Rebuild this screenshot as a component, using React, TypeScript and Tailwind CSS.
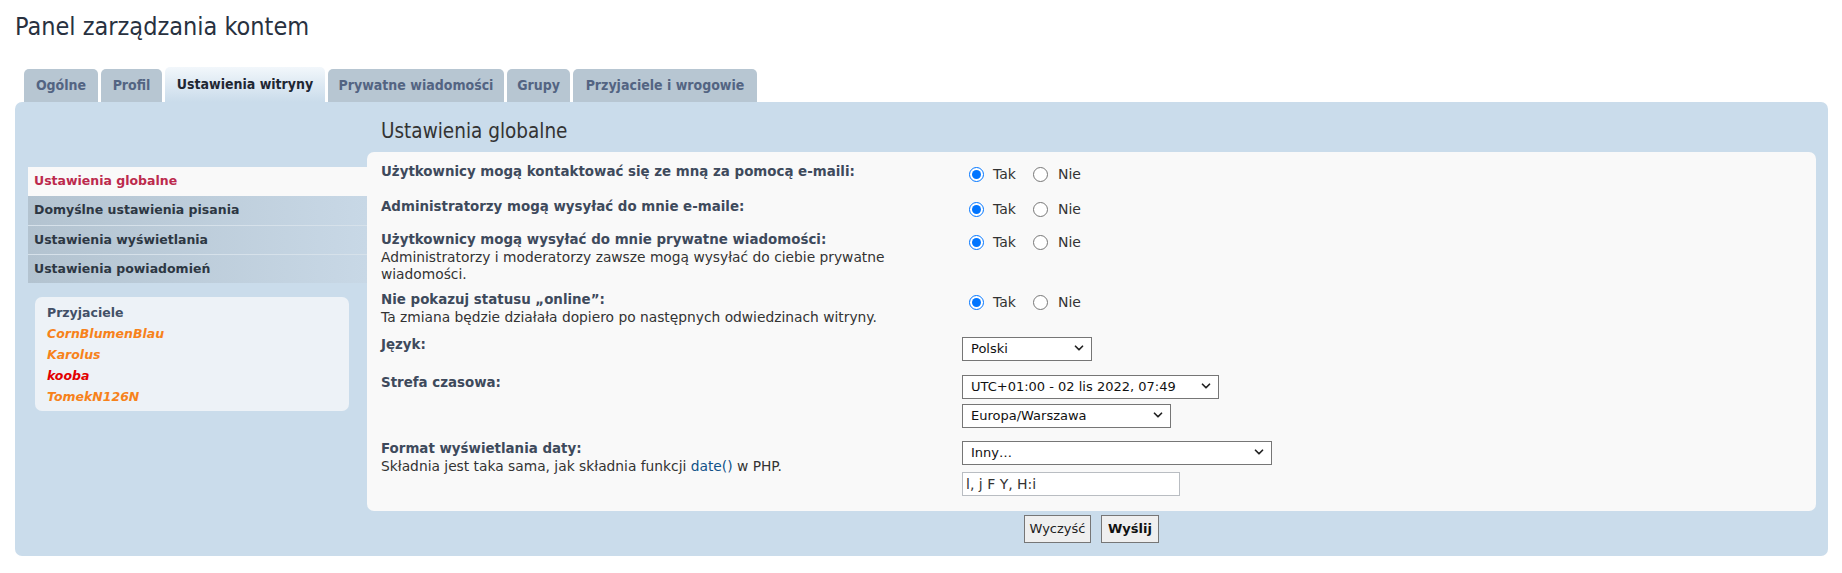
import React from 'react';
import { ChevronDown } from 'lucide-react';

const tabs = [
  { label: 'Ogólne', w: 'w-[74px]' },
  { label: 'Profil', w: 'w-[61px]' },
  { label: 'Ustawienia witryny', w: 'w-[160px]', active: true },
  { label: 'Prywatne wiadomości', w: 'w-[176px]' },
  { label: 'Grupy', w: 'w-[63px]' },
  { label: 'Przyjaciele i wrogowie', w: 'w-[184px]' },
];

const navItems = [
  { label: 'Ustawienia globalne', active: true },
  { label: 'Domyślne ustawienia pisania' },
  { label: 'Ustawienia wyświetlania' },
  { label: 'Ustawienia powiadomień' },
];

const friends = [
  { name: 'CornBlumenBlau', color: 'text-[#f7821b]' },
  { name: 'Karolus', color: 'text-[#f7821b]' },
  { name: 'kooba', color: 'text-[#e30000]' },
  { name: 'TomekN126N', color: 'text-[#f7821b]' },
];

function YesNo({ name }: { name: string }) {
  return (
    <div className="flex items-center pt-[4px] text-[14px] text-[#333]">
      <label className="flex items-center">
        <input type="radio" name={name} defaultChecked className="ml-[7px] h-[15px] w-[15px]" />
        <span className="ml-[9px] leading-[15px]">Tak</span>
      </label>
      <label className="ml-[17px] flex items-center">
        <input type="radio" name={name} className="h-[15px] w-[15px]" />
        <span className="ml-[10px] leading-[15px]">Nie</span>
      </label>
    </div>
  );
}

function Select({ value, w }: { value: string; w: string }) {
  return (
    <div className={`relative h-[24px] ${w}`}>
      <select
        defaultValue={value}
        className="h-full w-full appearance-none border border-[#767676] bg-white pl-[8px] text-[13px] text-[#111] outline-none"
      >
        <option>{value}</option>
      </select>
      <ChevronDown size={14} strokeWidth={3} className="pointer-events-none absolute right-[6px] top-[5px] text-[#222]" />
    </div>
  );
}

function Row({ h, label, explain, children }: { h?: string; label: string; explain?: React.ReactNode; children: React.ReactNode }) {
  return (
    <div className={`flex ${h ?? ''}`}>
      <div className="w-[581px] shrink-0 pr-[20px]">
        <div className="text-[13.4px] font-bold leading-[18px] text-[#3e4a5c]">{label}</div>
        {explain && <div className="text-[13.8px] leading-[17px] text-[#333]">{explain}</div>}
      </div>
      <div className="flex flex-col">{children}</div>
    </div>
  );
}

export default function App() {
  return (
    <div className="min-h-screen w-[1842px] bg-white pt-[13px] font-['DejaVu_Sans',sans-serif]">
      <h2 className="ml-[15px] font-['DejaVu_Sans_Condensed','Lato',sans-serif] text-[25px] leading-[28px] text-[#28313f]">
        Panel zarządzania kontem
      </h2>

      <div className="ml-[24px] mt-[26px] flex h-[35px] items-end gap-[3px]">
        {tabs.map((t) => (
          <div
            key={t.label}
            className={`${t.w} flex items-center justify-center rounded-t-[5px] font-['DejaVu_Sans_Condensed','Lato',sans-serif] text-[14px] font-bold ${
              t.active
                ? 'h-[35px] bg-gradient-to-b from-[#f2f7fb] to-[#cadceb] text-[#1f2733]'
                : 'h-[33px] bg-[#b7c6d2] text-[#536482]'
            }`}
          >
            {t.label}
          </div>
        ))}
      </div>

      <div className="ml-[15px] mr-[14px] flex h-[454px] rounded-[7px] bg-[#cadceb]">
        <div className="ml-[13px] w-[339px] shrink-0 pt-[65px]">
          {navItems.map((n, i) => (
            <div
              key={n.label}
              className={`flex h-[29px] items-center pl-[6px] text-[12.5px] font-bold ${
                n.active
                  ? 'bg-[#f9f9f9] text-[#bc2a4d]'
                  : 'bg-gradient-to-r from-[#b3c3d0] to-[#c8d8e6] text-[#2d3743]'
              } ${i > 1 ? 'border-t border-[#d6e1ea]' : ''}`}
            >
              {n.label}
            </div>
          ))}

          <div className="ml-[7px] mt-[14px] w-[314px] rounded-[7px] bg-[#edf2f7] pb-[4px] pl-[12px] pt-[5px] text-[12.5px] font-bold leading-[21px]">
            <div className="text-[#425067]">Przyjaciele</div>
            {friends.map((f) => (
              <div key={f.name} className={`italic ${f.color}`}>
                {f.name}
              </div>
            ))}
          </div>
        </div>

        <div className="mr-[12px] flex flex-1 flex-col pt-[15px]">
          <h3 className="mb-[7px] pl-[14px] font-['DejaVu_Sans_Condensed','Lato',sans-serif] text-[20.5px] leading-[28px] text-[#333]">
            Ustawienia globalne
          </h3>

          <div className="rounded-[7px] bg-[#f9f9f9] pb-[15px] pl-[14px] pt-[11px]">
            <Row h="h-[35px]" label="Użytkownicy mogą kontaktować się ze mną za pomocą e-maili:">
              <YesNo name="email" />
            </Row>
            <Row h="h-[33px]" label="Administratorzy mogą wysyłać do mnie e-maile:">
              <YesNo name="massemail" />
            </Row>
            <Row
              h="h-[60px]"
              label="Użytkownicy mogą wysyłać do mnie prywatne wiadomości:"
              explain="Administratorzy i moderatorzy zawsze mogą wysyłać do ciebie prywatne wiadomości."
            >
              <YesNo name="pm" />
            </Row>
            <Row
              h="h-[45px]"
              label="Nie pokazuj statusu „online”:"
              explain="Ta zmiana będzie działała dopiero po następnych odwiedzinach witryny."
            >
              <YesNo name="hideonline" />
            </Row>
            <Row h="h-[38px]" label="Język:">
              <Select value="Polski" w="w-[130px]" />
            </Row>
            <Row h="h-[66px]" label="Strefa czasowa:">
              <Select value="UTC+01:00 - 02 lis 2022, 07:49" w="w-[257px]" />
              <div className="mt-[5px]">
                <Select value="Europa/Warszawa" w="w-[209px]" />
              </div>
            </Row>
            <Row
              label="Format wyświetlania daty:"
              explain={
                <>
                  Składnia jest taka sama, jak składnia funkcji <span className="text-[#105289]">date()</span> w PHP.
                </>
              }
            >
              <Select value="Inny…" w="w-[310px]" />
              <input
                defaultValue="l, j F Y, H:i"
                className="mt-[8px] h-[24px] w-[218px] border border-[#b9bdc2] bg-white px-[3px] text-[14px] text-[#333] outline-none"
              />
            </Row>
          </div>

          <div className="mt-[4px] flex justify-center gap-[10px]">
            <button className="h-[28px] w-[67px] border border-[#767676] bg-[#efefef] text-[13px] text-[#222]">Wyczyść</button>
            <button className="h-[28px] w-[58px] border border-[#767676] bg-[#efefef] text-[13px] font-bold text-[#111]">Wyślij</button>
          </div>
        </div>
      </div>
    </div>
  );
}
